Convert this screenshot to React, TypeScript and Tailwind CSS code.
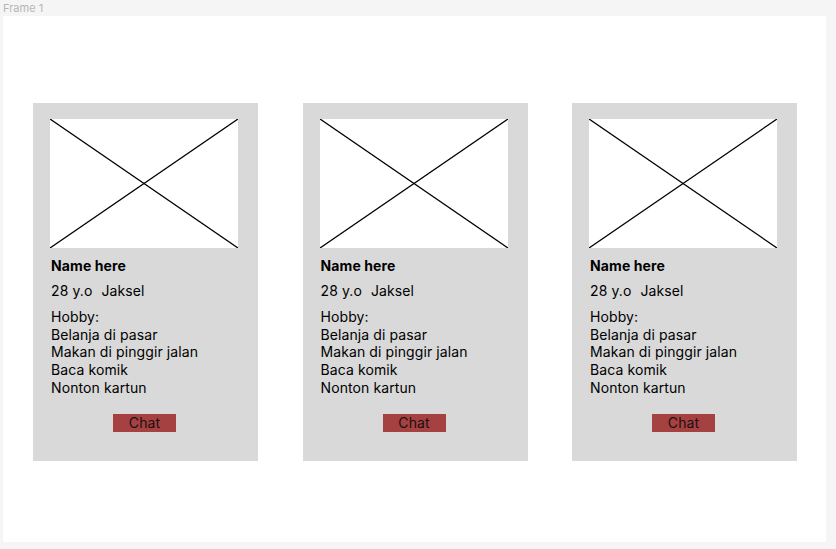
import React from "react";

function Card() {
  return (
    <div className="w-[225px] h-[358px] bg-[#d9d9d9] pt-[16px] pl-[17px] flex flex-col shrink-0">
      <div className="w-[188px] h-[129px] bg-white">
        <svg width="188" height="129" viewBox="0 0 188 129" className="block">
          <line x1="0" y1="0" x2="188" y2="129" stroke="#000" strokeWidth="1.3" />
          <line x1="0" y1="129" x2="188" y2="0" stroke="#000" strokeWidth="1.3" />
        </svg>
      </div>
      <div className="pl-[1px] tracking-[0.1px]">
        <div className="mt-[8px] h-[20px] leading-[20px] text-[14px] font-bold text-black">Name here</div>
        <div className="mt-[5px] h-[20px] leading-[20px] text-[14px] text-black flex gap-[9px]">
          <span>28 y.o</span>
          <span>Jaksel</span>
        </div>
        <div className="mt-[7px] text-[14px] leading-[17.7px] text-black">
          <div>Hobby:</div>
          <div>Belanja di pasar</div>
          <div>Makan di pinggir jalan</div>
          <div>Baca komik</div>
          <div>Nonton kartun</div>
        </div>
      </div>
      <div className="mt-[17px] pl-[63px]">
        <div className="w-[63px] h-[18px] bg-[#a64141] text-[14px] leading-[18px] text-center text-[#1a1010] tracking-[0.1px]">Chat</div>
      </div>
    </div>
  );
}

export default function App() {
  return (
    <div className="w-[836px] h-[549px] bg-[#f5f5f5] relative" style={{ fontFamily: "Inter, 'Noto Sans', sans-serif" }}>
      <div className="h-[16px] pl-[3px] text-[11px] leading-[16px] text-[#b5b5b5]">Frame 1</div>
      <div className="ml-[3px] w-[823px] h-[526px] bg-white pt-[87px] pl-[30px] flex gap-[44.5px]">
        <Card />
        <Card />
        <Card />
      </div>
    </div>
  );
}
